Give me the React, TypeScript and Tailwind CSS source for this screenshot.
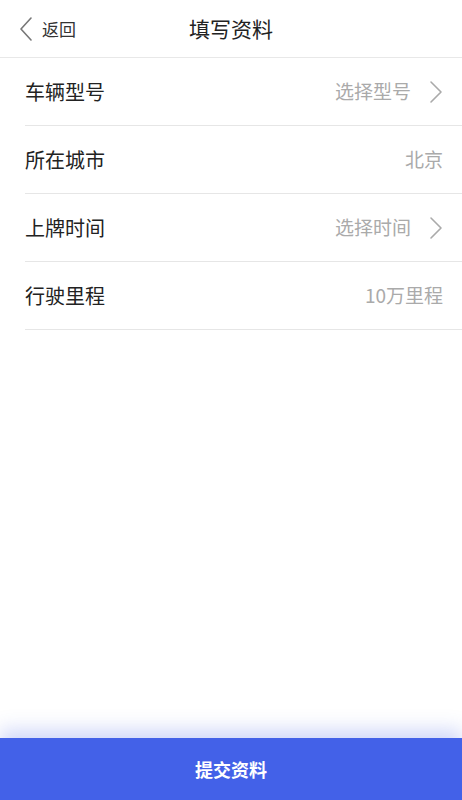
const ROWS = [
  { label: '车辆型号', value: '选择型号', arrow: true },
  { label: '所在城市', value: '北京', arrow: false },
  { label: '上牌时间', value: '选择时间', arrow: true },
  { label: '行驶里程', value: '10万里程', arrow: false },
]

function Chevron({ dir }: { dir: 'left' | 'right' }) {
  return (
    <svg width="14" height="24" viewBox="0 0 14 24" fill="none" className="shrink-0">
      <path
        d={dir === 'left' ? 'M12 1 L2 12 L12 23' : 'M2 2 L12 12 L2 22'}
        stroke={dir === 'left' ? '#777' : '#aaa'}
        strokeWidth="1.6"
        strokeLinecap="round"
        strokeLinejoin="round"
      />
    </svg>
  )
}

export default function App() {
  return (
    <div
      className="relative w-[462px] h-[800px] bg-white flex flex-col overflow-hidden"
      style={{ fontFamily: '"Noto Sans CJK SC", "Noto Sans", sans-serif' }}
    >
      {/* header */}
      <div className="relative h-[58px] flex items-center justify-center border-b border-[#e8e8e8] shrink-0">
        <div className="absolute left-[19px] top-0 h-full flex items-center gap-[9px]">
          <Chevron dir="left" />
          <span className="text-[17px] text-[#333]">返回</span>
        </div>
        <span className="text-[21px] text-[#222]">填写资料</span>
      </div>

      {/* form */}
      <div className="pl-[25px]">
        {ROWS.map((r) => (
          <div
            key={r.label}
            className="h-[68px] flex items-center justify-between pr-[19px] border-b border-[#e6e6e6]"
          >
            <span className="text-[20px] text-[#222]">{r.label}</span>
            <div className="flex items-center gap-[18px]">
              <span className="text-[19px] text-[#aaa]">{r.value}</span>
              {r.arrow && <Chevron dir="right" />}
            </div>
          </div>
        ))}
      </div>

      <div className="flex-1" />

      {/* submit */}
      <button className="h-[62px] w-full shrink-0 bg-[#4361e8] text-white text-[18px] font-semibold shadow-[0_-8px_18px_rgba(67,97,232,0.25)]">
        提交资料
      </button>
    </div>
  )
}
